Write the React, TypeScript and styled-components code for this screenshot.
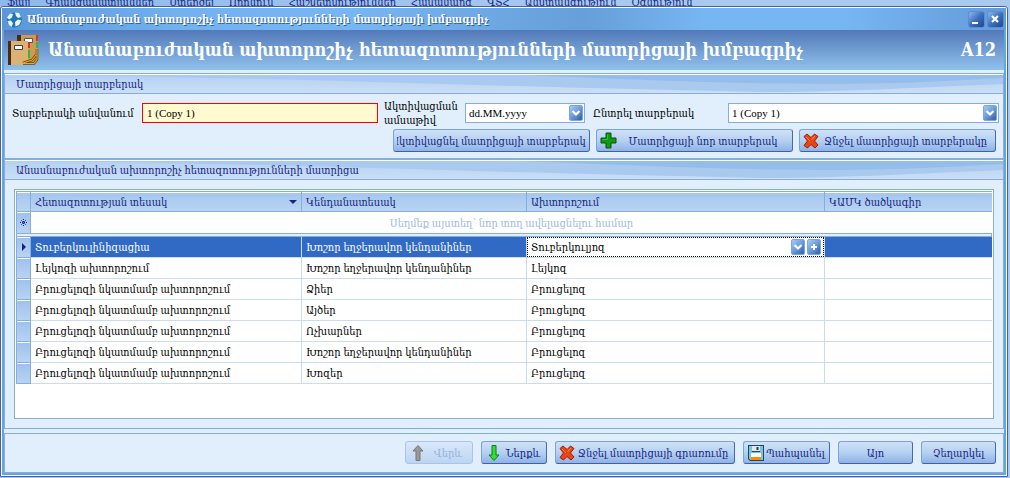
import React from "react";
import styled, { createGlobalStyle, css } from "styled-components";

const c = {
  navy: "#16247f",
  line: "#86addf",
  pale: "#e1effc",
  frame: "#6ba3dc",
  edge: "#3f62ae",
  selected: "#316ac5",
  cell: "#c9dbf5",
};

const Global = createGlobalStyle`
  * { box-sizing: border-box; }
  body {
    margin: 0;
    background: #a9c9ef;
    color: #000;
    font: 11px/14px "Liberation Serif", "DejaVu Serif Condensed", "DejaVu Serif", serif;
  }
  button, input, select { font: inherit; color: inherit; margin: 0; }
`;

const Screen = styled.div`
  display: flex;
  flex-direction: column;
  min-height: 100vh;
`;

const MenuBar = styled.nav`
  display: flex;
  align-items: flex-end;
  gap: 15px;
  height: 6px;
  padding-left: 7px;
  overflow: hidden;
  white-space: nowrap;
  background: linear-gradient(90deg, #8fb9ea, #a9c9ef 60%);
`;

const MenuLink = styled.a`
  flex: none;
  color: ${c.navy};
  text-decoration: none;
  line-height: 8px;
`;

const Window = styled.main`
  flex: 1;
  display: flex;
  flex-direction: column;
  margin: 0 2px 1px 0;
  border: 1px solid ${c.edge};
  border-radius: 3px 3px 0 0;
  background: #fff;
  padding: 1px;
`;

const Frame = styled.div`
  flex: 1;
  display: flex;
  flex-direction: column;
  padding: 0 2px 2px;
  background: ${c.frame};
`;

const TitleBar = styled.header`
  display: flex;
  align-items: center;
  height: 22px;
  padding: 0 2px 0 4px;
  background: linear-gradient(90deg, #5b97d8, #72b2f1 18%, #76b6f3 35%, #669fd9 58%, #76b6f3 70%, #76b6f3 84%, #639bd8);
`;

const WindowName = styled.span`
  flex: 1;
  margin-left: 4px;
  padding-top: 2px;
  color: #fff;
  font: bold 11px/20px "DejaVu Serif Condensed", "DejaVu Serif", serif;
  text-shadow: 1px 1px 0 #2f5da8;
  white-space: nowrap;
  overflow: hidden;
`;

const WindowButton = styled.button`
  display: flex;
  width: 17px;
  height: 17px;
  margin-left: 2px;
  padding: 0;
  border: 1px solid #5a8fd2;
  border-radius: 3px;
  background: linear-gradient(135deg, #8bb8ec, #3d70bb 50%, #1f4796);
  color: #fff;
  svg { display: block; width: 15px; height: 15px; }
`;

const Banner = styled.div`
  display: flex;
  align-items: center;
  height: 40px;
  padding: 0 8px 0 4px;
  background: linear-gradient(#5279b9, #90c1eb);
  color: #fff;
  font: bold 18px/24px "DejaVu Serif Condensed", "DejaVu Serif", serif;
`;

const Heading = styled.h1`
  flex: 1;
  margin: 0 0 0 8px;
  font: inherit;
  white-space: nowrap;
  overflow: hidden;
`;

const Content = styled.div`
  flex: 1;
  display: flex;
  flex-direction: column;
  padding-top: 3px;
  background: ${c.pale};
`;

const Group = styled.section<{ $grow?: boolean }>`
  display: flex;
  flex-direction: column;
  border: solid ${c.line};
  border-width: 1px 1px 0;
  ${(p) => p.$grow && css`
    flex: 1;
    border-width: 2px 1px 1px;
  `}
`;

const GroupHeader = styled.div`
  display: grid;
  height: 20px;
  border-top: 1px solid #fff;
  border-bottom: 1px solid ${c.line};
  background: linear-gradient(#b4d0f1, #cbdff6);
  > * { grid-area: 1 / 1; min-width: 0; }
`;

const GroupTitle = styled.h2`
  margin: 0;
  padding-left: 11px;
  color: ${c.navy};
  font: inherit;
  line-height: 19px;
`;

const Swoosh = styled.svg`
  display: block;
  width: 100%;
  height: 18px;
`;

const Form = styled.form`
  display: flex;
  flex-direction: column;
  height: 64px;
  padding: 2px 4px 6px 7px;
`;

const FieldRow = styled.div`
  display: flex;
  align-items: center;
  height: 33px;
`;

const Label = styled.label<{ $width: number; $gap?: number }>`
  flex: none;
  width: ${(p) => p.$width}px;
  margin-left: ${(p) => p.$gap || 0}px;
`;

const boxed = css`
  height: 20px;
  border: 1px solid ${c.line};
  background: #fff;
`;

const NameInput = styled.input`
  ${boxed}
  flex: 226 1 0;
  min-width: 0;
  padding: 0 4px;
  border-color: #f00;
  background: #fffacf;
  outline: none;
`;

const Combo = styled.span<{ $grow?: boolean }>`
  ${boxed}
  display: flex;
  align-items: center;
  gap: 2px;
  padding-right: 1px;
  ${(p) => (p.$grow ? "flex: 268 1 0; min-width: 0;" : "flex: none; width: 120px;")}
`;

const ComboInput = styled.input`
  flex: 1;
  min-width: 0;
  padding: 0 3px;
  border: 0;
  background: none;
  outline: none;
`;

const ComboSelect = styled.select`
  flex: 1;
  min-width: 0;
  padding: 0 3px;
  border: 0;
  background: none;
  appearance: none;
  outline: none;
`;

const DropButton = styled.button`
  flex: none;
  display: block;
  width: 14px;
  height: 16px;
  padding: 0;
  border: 1px solid #7ba7df;
  border-radius: 2px;
  background: linear-gradient(135deg, #a9cbf2, #6b9bdc 50%, #2f5da8);
  svg { display: block; width: 12px; height: 14px; }
`;

const Actions = styled.div`
  display: flex;
  justify-content: flex-end;
  gap: 6px;
  margin-right: 3px;
`;

const Button = styled.button<{ $width: number }>`
  flex: none;
  display: flex;
  align-items: center;
  justify-content: center;
  width: ${(p) => p.$width}px;
  height: 23px;
  padding: 0 3px;
  border: 1px solid;
  border-color: #7ba3dc #4767b4 #3f5fae #7ba3dc;
  border-radius: 3px;
  background: linear-gradient(#cfe1f8, #b5d0f2 50%, #8fb3e5);
  color: ${c.navy};
  white-space: nowrap;
  &:disabled {
    border-color: #a9c4e8;
    background: linear-gradient(#d9e8fa, #bdd5f3);
    color: #94b3dd;
  }
`;

const ButtonText = styled.span`
  flex: 1;
  display: flex;
  justify-content: center;
  min-width: 0;
  overflow: hidden;
`;

const Icon = styled.svg<{ $size: number }>`
  flex: none;
  display: block;
  width: ${(p) => p.$size}px;
  height: ${(p) => p.$size}px;
`;

const GridBox = styled.div`
  flex: 1;
  margin: 9px;
  padding: 1px;
  border: 1px solid ${c.line};
  background: #fff;
`;

const Grid = styled.table`
  width: 100%;
  table-layout: fixed;
  border-collapse: separate;
  border-spacing: 0;
  td, th { padding: 0 4px; text-align: left; font-weight: 400; white-space: nowrap; overflow: hidden; }
`;

const Col = styled.col<{ $width?: number }>`
  width: ${(p) => (p.$width ? `${p.$width}px` : "auto")};
`;

const HeadCell = styled.th`
  height: 21px;
  border-top: 1px solid ${c.line};
  border-bottom: 1px solid ${c.line};
  border-right: 1px solid ${c.line};
  box-shadow: inset 0 1px #fff;
  background: linear-gradient(#a3c6ee, #b9d3f2);
  color: ${c.navy};
  &:first-child { border-left: 1px solid ${c.line}; }
  &:last-child { border-right: 0; }
`;

const HeadLabel = styled.span`
  display: flex;
  align-items: center;
  justify-content: space-between;
`;

const Marker = styled.td`
  && { padding: 0; }
  border: solid ${c.line};
  border-width: 0 1px 1px;
  box-shadow: inset 0 1px #fff;
  background: linear-gradient(#9dc1ec, #b9d3f2);
  svg { margin: 0 auto; }
`;

const HintCell = styled.td`
  && { text-align: center; }
  height: 22px;
  border-bottom: 1px solid ${c.line};
  color: #9dbae2;
`;

const Divider = styled.td`
  && { padding: 0; }
  height: 3px;
  border: solid ${c.line};
  border-width: 0 1px 1px;
  background: ${c.pale};
`;

const Cell = styled.td`
  height: 21px;
  border-right: 1px solid ${c.cell};
  border-bottom: 1px solid ${c.cell};
  &:last-child { border-right: 0; }
`;

const Row = styled.tr<{ $selected?: boolean }>`
  ${(p) => p.$selected && css`
    ${Cell} { background: ${c.selected}; color: #fff; }
  `}
`;

const EditCell = styled(Cell)`
  && { padding: 0; background: #fff; color: #000; }
`;

const Editor = styled.span`
  display: flex;
  align-items: center;
  gap: 2px;
  height: 20px;
  padding-right: 2px;
  border: 1px dotted #000;
`;

const Footer = styled.footer`
  display: flex;
  justify-content: flex-end;
  gap: 8px;
  margin-top: 4px;
  padding: 7px 7px 8px;
  border: 1px solid ${c.line};
`;

const Chevron = () => (
  <svg viewBox="0 0 12 14" aria-hidden="true">
    <path d="M2.5 5l3.5 3.5L9.5 5" fill="none" stroke="#fff" strokeWidth="2.2" />
  </svg>
);

const Cross = () => (
  <Icon $size={16} viewBox="0 0 16 16" aria-hidden="true">
    <path d="M1 3.500L4 1l4 3.500L11.500 1l3.500 2.500L11.500 8l3.500 4-3 3-4-3.500L4.500 15 1 12.500 4.500 8z" fill="#f0420d" stroke="#8e2410" strokeWidth="1" />
    <path d="M3 4l4 4M12 3L8.500 7" stroke="#ff8a55" strokeWidth="1" fill="none" />
  </Icon>
);

const Plus = () => (
  <Icon $size={17} viewBox="0 0 17 17" aria-hidden="true">
    <path d="M6 1h5v5h5v5h-5v5H6v-5H1V6h5z" fill="#0e9c0e" stroke="#0c4d12" />
    <path d="M7.500 2.500v5h-5" stroke="#35bd35" fill="none" />
  </Icon>
);

const Arrow = ({ up }: { up?: boolean }) => (
  <Icon $size={18} viewBox="0 0 18 18" aria-hidden="true">
    {up ? (
      <path d="M9 1.500l5 5.500h-3v9.500H7V7H4z" fill="#999" stroke="#777" />
    ) : (
      <path d="M9 16.500L4 11h3V1.500h4V11h3z" fill="#2fe02f" stroke="#147a1c" />
    )}
  </Icon>
);

const Floppy = () => (
  <Icon $size={18} viewBox="0 0 18 18" aria-hidden="true">
    <path d="M1 1h16v16H3l-2-2z" fill="#1d4a5e" />
    <path d="M2 2h3v6h8V2h3v14H3.500L2 14.500z" fill="#7cc3dd" />
    <path d="M5 2h8v5H5z" fill="#dfe8ec" />
    <path d="M9.500 3h2v3h-2z" fill="#173f52" />
    <path d="M4 9h10v5H4z" fill="#fff" />
    <path d="M4 13h10v3H4z" fill="#ff8a00" />
  </Icon>
);

const AppIcon = () => (
  <Icon $size={17} viewBox="0 0 17 17" aria-hidden="true">
    <circle cx="8.500" cy="9" r="7.500" fill="#2476b5" />
    <path d="M1 6.500l3-4 3 .5-1 3.500-3 2zM9 1.500l4 .5 2 4-3 1-2-2zM1.500 10l3.500-.5 2 3L5.500 16 3 14zM9 11l3-2.500 3.500 1L13 14l-3.500 1.500z" fill="#e8f8ff" />
  </Icon>
);

const Books = () => (
  <Icon $size={32} viewBox="0 0 32 32" aria-hidden="true">
    <path d="M9 1h21v27H9z" fill="#c99b55" />
    <path d="M9 1h4v7H9z" fill="#4a2a14" />
    <path d="M28 1h2v6h-2z" fill="#e33022" />
    <path d="M28 8h2v6h-2z" fill="#36b34a" />
    <path d="M16.500 4.500h8v4h-8z" fill="#fff" stroke="#555" />
    <path d="M0 7h20v24H0z" fill="#dbb272" />
    <path d="M0 7h3v24H0z" fill="#4a2a14" />
    <path d="M6.500 11.500h8v4h-8z" fill="#fff" stroke="#444" />
    <path d="M20 9h2v5h-2z" fill="#e33022" />
    <path d="M20 16h2v8h-2z" fill="#36b34a" />
    <path d="M15 29.500h11l3-4V15M15 29l9-3 4-5" fill="none" stroke="#6b420a" strokeWidth="2.500" />
    <path d="M15 29.500h11l3-4V15M15 29l9-3 4-5" fill="none" stroke="#e3ab2c" strokeWidth="1.200" />
  </Icon>
);

const Header = ({ children }: { children: React.ReactNode }) => (
  <GroupHeader>
    <Swoosh viewBox="0 0 1000 18" preserveAspectRatio="none" aria-hidden="true">
      <path d="M0 0C250 1 480 12 760 17C850 17 940 11 1000 9V0z" fill="#a9c9ef" />
      <path d="M520 0C640 5 740 9 820 9C900 9 960 5 1000 3V0z" fill="#94bdea" />
    </Swoosh>
    <GroupTitle>{children}</GroupTitle>
  </GroupHeader>
);

const menu = ["Ֆայլ", "Գրանցամատյաններ", "Ստեղծել", "Որոնում", "Հաշվետվություններ", "Համակարգ", "ՎՏՀ", "Անվտանգություն", "Օգնություն"];
const title = "Անասնաբուժական ախտորոշիչ հետազոտությունների մատրիցայի խմբագրիչ";
const brucellosis = "Բրուցելոզի նկատմամբ ախտորոշում";
const cattle = "Խոշոր եղջերավոր կենդանիներ";
const rows = [
  ["Լեյկոզի ախտորոշում", cattle, "Լեյկոզ"],
  [brucellosis, "Ձիեր", "Բրուցելոզ"],
  [brucellosis, "Այծեր", "Բրուցելոզ"],
  [brucellosis, "Ոչխարներ", "Բրուցելոզ"],
  [brucellosis, cattle, "Բրուցելոզ"],
  [brucellosis, "Խոզեր", "Բրուցելոզ"],
];

export default function App() {
  return (
    <Screen>
      <Global />
      <MenuBar>
        {menu.map((m) => <MenuLink href="#" key={m}>{m}</MenuLink>)}
      </MenuBar>
      <Window>
        <TitleBar>
          <AppIcon />
          <WindowName>{title}</WindowName>
          <WindowButton aria-label="Minimize">
            <svg viewBox="0 0 15 15"><path d="M3 10h6v2H3z" fill="#fff" /></svg>
          </WindowButton>
          <WindowButton aria-label="Close">
            <svg viewBox="0 0 15 15"><path d="M4 4l6 6M10 4l-6 6" stroke="#fff" strokeWidth="2.2" /></svg>
          </WindowButton>
        </TitleBar>
        <Frame>
          <Banner>
            <Books />
            <Heading>{title}</Heading>
            <span>A12</span>
          </Banner>
          <Content>
            <Group>
              <Header>Մատրիցայի տարբերակ</Header>
              <Form onSubmit={(e) => e.preventDefault()}>
                <FieldRow>
                  <Label htmlFor="name" $width={130}>Տարբերակի անվանում</Label>
                  <NameInput id="name" defaultValue="1 (Copy 1)" />
                  <Label htmlFor="date" $width={81} $gap={6}>Ակտիվացման ամսաթիվ</Label>
                  <Combo>
                    <ComboInput id="date" defaultValue="dd.MM.yyyy" />
                    <DropButton type="button" aria-label="Ամսաթիվ"><Chevron /></DropButton>
                  </Combo>
                  <Label htmlFor="version" $width={135} $gap={8}>Ընտրել տարբերակ</Label>
                  <Combo $grow>
                    <ComboSelect id="version"><option>1 (Copy 1)</option></ComboSelect>
                    <DropButton type="button" aria-label="Տարբերակ"><Chevron /></DropButton>
                  </Combo>
                </FieldRow>
                <Actions>
                  <Button type="button" $width={197}><ButtonText>Ակտիվացնել մատրիցայի տարբերակը</ButtonText></Button>
                  <Button type="button" $width={197}><Plus /><ButtonText>Մատրիցայի նոր տարբերակ</ButtonText></Button>
                  <Button type="button" $width={197}><Cross /><ButtonText>Ջնջել մատրիցայի տարբերակը</ButtonText></Button>
                </Actions>
              </Form>
            </Group>
            <Group $grow>
              <Header>Անասնաբուժական ախտորոշիչ հետազոտությունների մատրիցա</Header>
              <GridBox>
                <Grid>
                  <colgroup>
                    <Col $width={15} /><Col $width={271} /><Col $width={225} /><Col $width={298} /><Col />
                  </colgroup>
                  <thead>
                    <tr>
                      <HeadCell />
                      <HeadCell>
                        <HeadLabel>
                          Հետազոտության տեսակ
                          <Icon $size={8} viewBox="0 0 8 8" aria-hidden="true"><path d="M0 2h8L4 6z" fill={c.navy} /></Icon>
                        </HeadLabel>
                      </HeadCell>
                      <HeadCell>Կենդանատեսակ</HeadCell>
                      <HeadCell>Ախտորոշում</HeadCell>
                      <HeadCell>ԿԱՄԿ ծածկագիր</HeadCell>
                    </tr>
                  </thead>
                  <tbody>
                    <tr>
                      <Marker>
                        <Icon $size={7} viewBox="0 0 7 7" aria-hidden="true">
                          <path d="M3.500 0v7M0 3.500h7M1 1l5 5M6 1L1 6" stroke={c.navy} strokeWidth="1" strokeDasharray="1 1" />
                        </Icon>
                      </Marker>
                      <HintCell colSpan={4}>Սեղմեք այստեղ՝ նոր տող ավելացնելու համար</HintCell>
                    </tr>
                    <tr><Divider colSpan={5} /></tr>
                    <Row $selected>
                      <Marker>
                        <Icon $size={8} viewBox="0 0 8 8" aria-hidden="true"><path d="M2 0l4 4-4 4z" fill={c.navy} /></Icon>
                      </Marker>
                      <Cell>Տուբերկուլինիզացիա</Cell>
                      <Cell>{cattle}</Cell>
                      <EditCell>
                        <Editor>
                          <ComboInput aria-label="Ախտորոշում" defaultValue="Տուբերկուլյոզ" />
                          <DropButton type="button" aria-label="Ընտրել"><Chevron /></DropButton>
                          <DropButton type="button" aria-label="Ավելացնել">
                            <svg viewBox="0 0 12 14"><path d="M6 4v6M3 7h6" stroke="#fff" strokeWidth="2" /></svg>
                          </DropButton>
                        </Editor>
                      </EditCell>
                      <Cell />
                    </Row>
                    {rows.map((r, i) => (
                      <Row key={i}>
                        <Marker />
                        {r.map((v, j) => <Cell key={j}>{v}</Cell>)}
                        <Cell />
                      </Row>
                    ))}
                  </tbody>
                </Grid>
              </GridBox>
            </Group>
            <Footer>
              <Button $width={68} disabled><Arrow up /><ButtonText>Վերև</ButtonText></Button>
              <Button $width={66}><Arrow /><ButtonText>Ներքև</ButtonText></Button>
              <Button $width={180}><Cross /><ButtonText>Ջնջել մատրիցայի գրառումը</ButtonText></Button>
              <Button $width={87}><Floppy /><ButtonText>Պահպանել</ButtonText></Button>
              <Button $width={75}><ButtonText>Այո</ButtonText></Button>
              <Button $width={75}><ButtonText>Չեղարկել</ButtonText></Button>
            </Footer>
          </Content>
        </Frame>
      </Window>
    </Screen>
  );
}
